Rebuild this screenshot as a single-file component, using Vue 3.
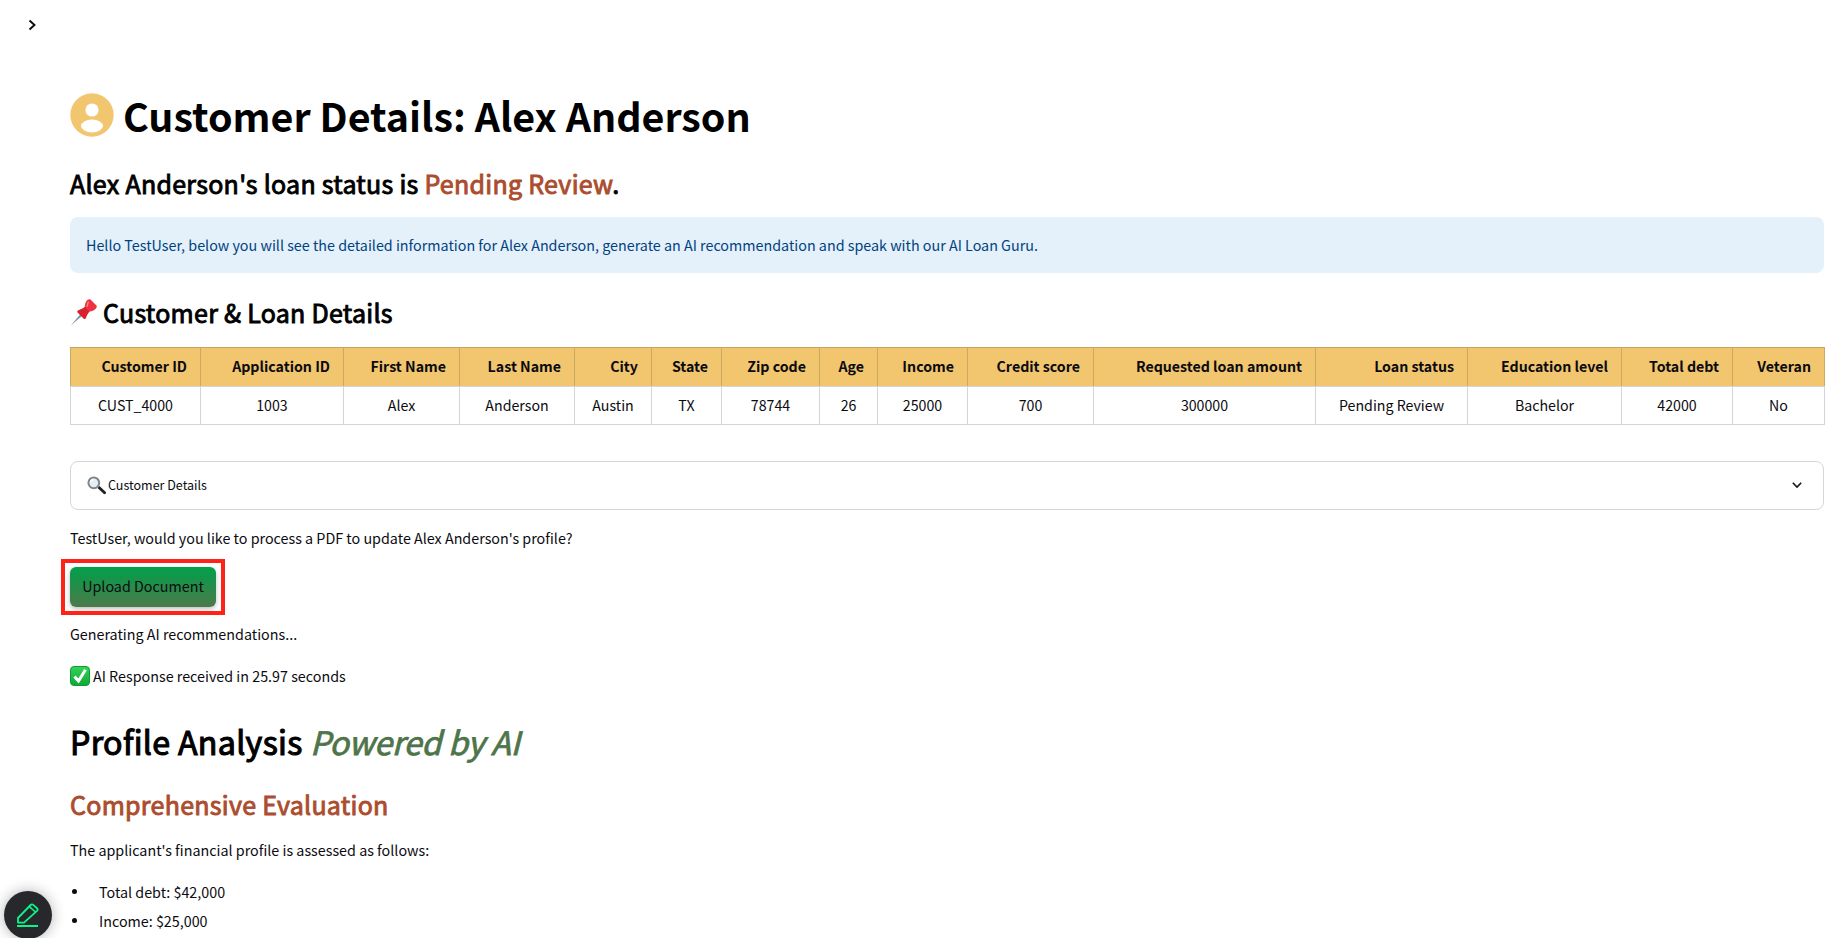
<template>
  <div class="page">
    <!-- sidebar toggle -->
    <div class="top-bar">
      <svg class="chevron-right" width="12" height="14" viewBox="0 0 12 14">
        <path d="M3.5 2.5 L8.5 7 L3.5 11.5" fill="none" stroke="#0b0b10" stroke-width="1.9" />
      </svg>
    </div>

    <main class="content">
      <h1 class="title">
        <svg class="avatar" width="44" height="44" viewBox="0 0 44 44">
          <circle cx="22" cy="22" r="21.7" fill="#f2c56f" />
          <circle cx="22" cy="17" r="6.6" fill="#fff" />
          <ellipse cx="22" cy="33" rx="11" ry="6.4" fill="#fff" />
        </svg>
        <span>Customer Details: Alex Anderson</span>
      </h1>

      <h3 class="status">Alex Anderson's loan status is <span class="rust">Pending Review</span>.</h3>

      <div class="alert">
        Hello TestUser, below you will see the detailed information for Alex Anderson, generate an AI recommendation and speak with our AI Loan Guru.
      </div>

      <h3 class="section">
        <svg class="pin" width="28" height="27" viewBox="1 1.5 25.5 26">
          <path d="M1 27 L10 16.5 L11.5 18 Z" fill="#7d93a8" />
          <path d="M8 12.5 C10.5 11.5 13 10.5 15 8.5 L19.5 13 C17.5 15 16.5 17.5 15.5 20 C15 21 14 21 13.5 20.5 L7.5 14.5 C7 14 7 13 8 12.5 Z" fill="#d8232f" />
          <path d="M14.5 9 C14.5 6.5 15.5 4 17 2.5 C18 1.5 19 1.5 20 2 L25.5 7.5 C26.5 8.5 26 10 25 10.8 C23.5 12.3 21.5 13.5 19 13.5 Z" fill="#ee3340" />
          <path d="M18 4 L16.5 9" stroke="#f8858c" stroke-width="1.4" fill="none" />
        </svg>
        Customer &amp; Loan Details
      </h3>

      <table class="data-table">
        <colgroup>
          <col v-for="c in columns" :key="c.label" :style="{ width: c.width + 'px' }" />
        </colgroup>
        <thead>
          <tr>
            <th v-for="c in columns" :key="c.label">{{ c.label }}</th>
          </tr>
        </thead>
        <tbody>
          <tr>
            <td v-for="c in columns" :key="c.label">{{ c.value }}</td>
          </tr>
        </tbody>
      </table>

      <div class="expander">
        <div class="expander-label">
          <svg width="20" height="20" viewBox="0 0 20 20">
            <path d="M10.5 12 L12.5 10 L18.6 15.8 C19.2 16.4 19.2 17.2 18.6 17.8 C18 18.4 17.2 18.4 16.6 17.8 Z" fill="#1f2125" />
            <circle cx="6.8" cy="6.8" r="5.4" fill="#e6eef5" stroke="#7e868d" stroke-width="2" />
            <path d="M3.5 6.4 C3.8 4.8 5 3.7 6.6 3.5" fill="none" stroke="#fff" stroke-width="1.3" />
          </svg>
          <span class="expander-text">Customer Details</span>
        </div>
        <svg class="chevron-down" width="12" height="8" viewBox="0 0 12 8">
          <path d="M1.8 1.8 L6 6 L10.2 1.8" fill="none" stroke="#15161c" stroke-width="1.6" />
        </svg>
      </div>

      <p class="question">TestUser, would you like to process a PDF to update Alex Anderson's profile?</p>

      <div class="upload-row">
        <button class="upload-btn">
          Upload Document
          <span class="highlight"></span>
        </button>
      </div>

      <p class="generating">Generating AI recommendations...</p>

      <p class="response">
        <svg width="20" height="20" viewBox="0 0 20 20">
          <defs>
            <linearGradient id="check-bg" x1="0" y1="0" x2="0" y2="1">
              <stop offset="0" stop-color="#35d35a" />
              <stop offset="1" stop-color="#10a838" />
            </linearGradient>
          </defs>
          <rect x="0.5" y="0.5" width="19" height="19" rx="3.5" fill="url(#check-bg)" stroke="#0f9c38" />
          <path d="M4.5 10.5 L8.5 15 L15.5 3.8" fill="none" stroke="#fff" stroke-width="3" />
        </svg>
        <span>AI Response received in 25.97 seconds</span>
      </p>

      <h2 class="analysis">Profile Analysis <em>Powered by AI</em></h2>
      <h3 class="evaluation">Comprehensive Evaluation</h3>
      <p class="intro">The applicant's financial profile is assessed as follows:</p>
      <ul class="facts">
        <li v-for="f in facts" :key="f">{{ f }}</li>
      </ul>
    </main>

    <!-- floating edit button -->
    <div class="fab">
      <svg width="24" height="26" viewBox="0 0 24 26">
        <path d="M2 16 L14.6 3 C15.4 2.2 16.4 2.2 17.2 2.9 L21 6.2 C21.8 7 21.8 8 21 8.8 L8 20.6 H2 Z" fill="none" stroke="#0cf58a" stroke-width="1.8" stroke-linejoin="round" />
        <path d="M13.4 4.6 L19.4 10" fill="none" stroke="#0cf58a" stroke-width="1.6" />
        <path d="M1 24 H22" fill="none" stroke="#0cf58a" stroke-width="2" />
      </svg>
    </div>
  </div>
</template>

<script setup>
const columns = [
  { label: 'Customer ID', value: 'CUST_4000', width: 130 },
  { label: 'Application ID', value: '1003', width: 143 },
  { label: 'First Name', value: 'Alex', width: 116 },
  { label: 'Last Name', value: 'Anderson', width: 115 },
  { label: 'City', value: 'Austin', width: 77 },
  { label: 'State', value: 'TX', width: 70 },
  { label: 'Zip code', value: '78744', width: 98 },
  { label: 'Age', value: '26', width: 58 },
  { label: 'Income', value: '25000', width: 90 },
  { label: 'Credit score', value: '700', width: 126 },
  { label: 'Requested loan amount', value: '300000', width: 222 },
  { label: 'Loan status', value: 'Pending Review', width: 152 },
  { label: 'Education level', value: 'Bachelor', width: 154 },
  { label: 'Total debt', value: '42000', width: 111 },
  { label: 'Veteran', value: 'No', width: 92 }
]

const facts = ['Total debt: $42,000', 'Income: $25,000']
</script>

<style>
html, body {
  height: 938px;
  overflow: hidden;
  background: #fff;
}
</style>

<style scoped>
* {
  box-sizing: border-box;
}

.page {
  position: relative;
  height: 938px;
  overflow: hidden;
  font-family: "Noto Sans CJK SC", "Noto Sans", sans-serif;
  font-size: 14.32px;
  color: #0b0b10;
}

.top-bar {
  height: 48px;
  padding: 18px 0 0 26px;
}

.chevron-right {
  display: block;
}

.content {
  padding: 45px 23px 0 70px;
}

.title {
  display: flex;
  align-items: center;
  gap: 9px;
  margin: 0;
  height: 44px;
  font-size: 39.4px;
  font-weight: 700;
  line-height: 44px;
  color: #000;
}

.avatar {
  flex: none;
}

.status,
.section,
.evaluation {
  font-size: 25px;
  line-height: 40px;
  font-weight: 400;
  letter-spacing: 0.28px;
  -webkit-text-stroke: 0.9px currentColor;
  color: #000;
}

.status {
  margin: 26px 0 0;
}

.rust {
  color: #ab4d2e;
}

.alert {
  margin-top: 14px;
  height: 56px;
  padding: 16px;
  line-height: 24px;
  border-radius: 8px;
  background: #e4f0fa;
  color: #004280;
}

.section {
  display: flex;
  align-items: center;
  gap: 5px;
  margin: 19px 0 0;
}

.data-table {
  width: 1754px;
  margin-top: 15px;
  table-layout: fixed;
  border-collapse: collapse;
  font-size: 14.2px;
}

.data-table th {
  height: 39px;
  padding: 0 13px 2px;
  text-align: right;
  font-weight: 700;
  background: #f2c56f;
  color: #0b0b10;
  border-top: 1px solid #c6a25c;
  border-left: 1px solid #cba962;
  border-right: 1px solid #cba962;
  border-bottom: 1px solid #d3d5dc;
}

.data-table td {
  height: 38px;
  padding: 0 10px 2px;
  text-align: center;
  border: 1px solid #d3d5d9;
  border-top: none;
}

.expander {
  display: flex;
  align-items: center;
  justify-content: space-between;
  height: 49px;
  margin-top: 36px;
  padding: 0 20px 0 16px;
  border: 1px solid #d5d6da;
  border-radius: 8px;
}

.expander-label {
  display: flex;
  align-items: center;
  gap: 1px;
  font-size: 12.5px;
}

.expander-text {
  padding-bottom: 3px;
}

.chevron-down {
  margin-bottom: 2px;
}

.question {
  margin: 16px 0 0;
  line-height: 24px;
}

.upload-row {
  margin-top: 17px;
  height: 40px;
}

.upload-btn {
  position: relative;
  width: 146px;
  height: 40px;
  padding: 0 0 3px;
  border: none;
  border-radius: 6px;
  font-family: inherit;
  font-size: 14.32px;
  color: #0b0b10;
  background: linear-gradient(180deg, #00a049, #4b794b);
  box-shadow: 0 2px 5px rgba(0, 0, 0, 0.25);
}

.highlight {
  position: absolute;
  top: -8px;
  left: -9px;
  right: -9px;
  bottom: -8px;
  border: 4px solid #ff2218;
}

.generating {
  margin: 15px 0 0;
  line-height: 24px;
}

.response {
  display: flex;
  align-items: center;
  gap: 3px;
  margin: 18px 0 0;
  line-height: 24px;
}

.analysis {
  margin: 29px 0 0;
  font-size: 32.2px;
  line-height: 48px;
  font-weight: 400;
  letter-spacing: 0.3px;
  -webkit-text-stroke: 1.1px currentColor;
  color: #000;
}

.analysis em {
  color: #4e7449;
  letter-spacing: -0.2px;
  -webkit-text-stroke: 0.8px currentColor;
}

.evaluation {
  margin: 19px 0 0;
  color: #ab4d2e;
}

.intro {
  margin: 14px 0 0;
  line-height: 24px;
}

.facts {
  margin: 17px 0 0;
  padding: 0;
  list-style: none;
}

.facts li {
  display: flex;
  align-items: center;
  gap: 22px;
  height: 24px;
  margin-bottom: 5.5px;
  padding-left: 2px;
}

.facts li::before {
  content: '';
  width: 5px;
  height: 5px;
  border-radius: 50%;
  background: #0b0b10;
}

.fab {
  position: fixed;
  left: 4px;
  top: 891px;
  width: 48px;
  height: 48px;
  border-radius: 50%;
  background: #26282c;
  display: flex;
  align-items: center;
  justify-content: center;
  box-shadow: 0 0 14px rgba(0, 0, 0, 0.3);
}
</style>
